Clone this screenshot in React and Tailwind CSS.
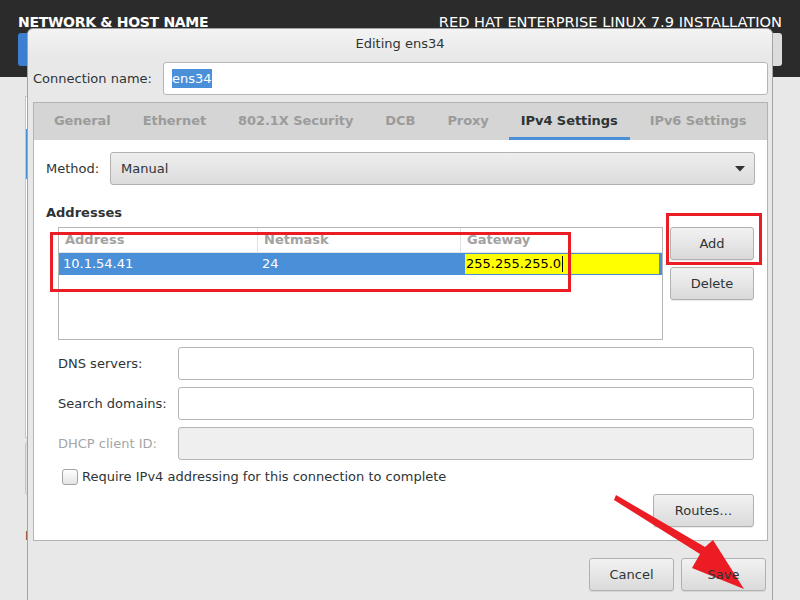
import React from "react";

const btn =
  "flex items-center justify-center rounded-[3px] border border-[#b1b1b1] bg-gradient-to-b from-[#f2f2f2] to-[#dadada] text-[13px] text-[#2e3436] shadow-[0_1px_0_rgba(0,0,0,0.08)]";

function Tab({ label, active }) {
  return (
    <div className="relative flex h-full items-center px-[16px] pb-[1px]">
      <span className={"font-bold text-[13px] tracking-[-0.07px] " + (active ? "text-[#2e3436]" : "text-[#9b9b9b]")}>{label}</span>
      {active && <div className="absolute bottom-0 left-[4px] right-[4px] h-[3px] bg-[#4a90d9]" />}
    </div>
  );
}

function Field({ label, disabled }) {
  return (
    <div className="mt-[7px] flex h-[33px] items-center">
      <div className={"w-[120px] text-[13px] " + (disabled ? "text-[#a5a5a5]" : "text-[#2e3436]")}>{label}</div>
      <div
        className={
          "h-full flex-1 rounded-[3px] border border-[#b6b6b6] " + (disabled ? "bg-[#efefef]" : "bg-white")
        }
      />
    </div>
  );
}

export default function App() {
  return (
    <div className="relative h-[600px] w-[800px] overflow-hidden bg-[#e8e8e8] font-['DejaVu_Sans',sans-serif] text-[13px] text-[#2e3436]">
      {/* header */}
      <div className="flex h-[77px] justify-between bg-[#2b2b2b] pl-[18px] pr-[18px] pt-[12px]">
        <div className="flex flex-col">
          <div className="text-[14px] font-bold leading-[20px] text-white tracking-[-0.3px]">NETWORK &amp; HOST NAME</div>
          <div className="mt-[1px] h-[33px] w-[80px] rounded-[3px] bg-[#3c7fd0]" />
        </div>
        <div className="flex flex-col items-end">
          <div className="text-[14.6px] leading-[20px] text-white">RED HAT ENTERPRISE LINUX 7.9 INSTALLATION</div>
          <div className="mt-[1px] h-[33px] w-[80px] rounded-[3px] bg-[#dcdcdc]" />
        </div>
      </div>

      {/* background page content (mostly hidden) */}
      <div className="flex pl-[25px] pt-[19px]">
        <div className="flex flex-col">
          <div className="relative h-[342px] w-[80px] border border-[#c4c4c4] bg-white">
            <div className="absolute left-0 top-[32px] h-[50px] w-[3px] bg-[#4a90d9]" />
          </div>
          <div className="mt-[3px] h-[55px] w-[80px] rounded-[4px] border border-[#c4c4c4] bg-[#dedede]" />
          <div className="mt-[30px] text-[13px]">Host name:</div>
        </div>
      </div>

      {/* dialog */}
      <div className="absolute left-[27px] top-[28px] flex h-[600px] w-[746px] flex-col rounded-t-[6px] border border-[#a3a3a3] bg-[#e8e8e8]">
        <div className="flex h-[29px] items-center justify-center rounded-t-[6px] bg-gradient-to-b from-[#f3f3f3] to-[#e8e8e8] text-[13px] text-[#2e3436]">
          Editing ens34
        </div>
        <div className="flex flex-col pl-[5px] pr-[4px]">
          <div className="mt-[4px] flex h-[33px] items-center">
            <div className="w-[130px]">Connection name:</div>
            <div className="flex h-full flex-1 items-center rounded-[3px] border border-[#b6b6b6] bg-white pl-[8px]">
              <span className="bg-[#4a90d9] text-white">ens34</span>
            </div>
          </div>

          {/* notebook */}
          <div className="mt-[7px] flex h-[439px] flex-col border border-[#b3b3b3] bg-white">
            <div className="flex h-[37px] bg-[#d5d5d5] pl-[4px]">
              <Tab label="General" />
              <Tab label="Ethernet" />
              <Tab label="802.1X Security" />
              <Tab label="DCB" />
              <Tab label="Proxy" />
              <Tab label="IPv4 Settings" active />
              <Tab label="IPv6 Settings" />
            </div>
            <div className="flex flex-1 flex-col px-[12px] pt-[12px]">
              <div className="flex h-[33px] items-center">
                <div className="w-[64px]">Method:</div>
                <div className="flex h-full flex-1 items-center justify-between rounded-[3px] border border-[#b1b1b1] bg-gradient-to-b from-[#eeeeee] to-[#dcdcdc] pl-[10px] pr-[9px]">
                  <span>Manual</span>
                  <svg width="10" height="6" viewBox="0 0 10 6">
                    <polygon points="0,0 10,0 5,5.5" fill="#2e3436" />
                  </svg>
                </div>
              </div>
              <div className="mt-[20px] h-[16px] font-bold leading-[16px]">Addresses</div>

              <div className="ml-[12px] mr-[1px] flex flex-col">
                <div className="mt-[6px] flex gap-[7px]">
                  <div className="flex h-[113px] w-[605px] flex-col border border-[#b6b6b6] bg-white">
                    <div className="flex h-[25px] border-b border-[#e2e2e2] font-bold text-[#a2a2a2]">
                      <div className="flex w-[199px] items-center border-r border-[#e2e2e2] pl-[6px]">Address</div>
                      <div className="flex w-[203px] items-center border-r border-[#e2e2e2] pl-[6px]">Netmask</div>
                      <div className="flex flex-1 items-center pl-[6px]">Gateway</div>
                    </div>
                    <div className="flex h-[22px] bg-[#4a90d9] text-white">
                      <div className="flex w-[199px] items-center pl-[4px]">10.1.54.41</div>
                      <div className="flex w-[203px] items-center pl-[4px]">24</div>
                      <div className="flex flex-1 items-center py-[1px] pl-[4px] pr-[3px]">
                        <div className="flex h-full flex-1 items-center bg-[#ffff00] pl-[1px] text-black">
                          255.255.255.0<span className="ml-[1px] inline-block h-[16px] w-[1px] bg-black" />
                        </div>
                      </div>
                    </div>
                  </div>
                  <div className="flex w-[84px] flex-col gap-[7px]">
                    <div className={btn + " h-[33px]"}>Add</div>
                    <div className={btn + " h-[33px]"}>Delete</div>
                  </div>
                </div>

                <Field label="DNS servers:" />
                <Field label="Search domains:" />
                <Field label="DHCP client ID:" disabled />

                <div className="mt-[9px] flex h-[16px] items-center">
                  <div className="ml-[4px] h-[16px] w-[16px] rounded-[3px] border border-[#a3a3a3] bg-gradient-to-b from-[#ffffff] to-[#e4e4e4]" />
                  <div className="ml-[4px]">Require IPv4 addressing for this connection to complete</div>
                </div>
                <div className="mt-[9px] flex justify-end">
                  <div className={btn + " h-[33px] w-[101px]"}>Routes…</div>
                </div>
              </div>
            </div>
          </div>

          <div className="mt-[17px] flex justify-end gap-[7px] pr-[2px]">
            <div className={btn + " h-[33px] w-[85px]"}>Cancel</div>
            <div className={btn + " h-[33px] w-[85px]"}>
              <span className="relative z-10">Save</span>
            </div>
          </div>
        </div>
      </div>

      {/* annotations */}
      <div className="absolute left-[50px] top-[232px] h-[60px] w-[521px] border-[3px] border-[#ec1c24]" />
      <div className="absolute left-[666px] top-[213px] h-[52px] w-[96px] border-[3px] border-[#ec1c24]" />
      <svg className="absolute left-0 top-0" width="800" height="600" viewBox="0 0 800 600">
        <polygon
          points="616,495 705,547 713,540 744,589 692,568 700,554 614,500"
          fill="#ec1c24"
        />
      </svg>
    </div>
  );
}
